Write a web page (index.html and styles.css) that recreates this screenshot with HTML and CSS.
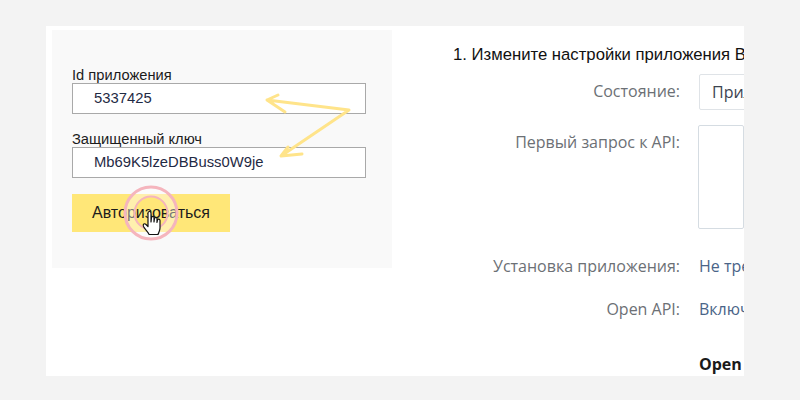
FILE: index.html
```html
<!DOCTYPE html>
<html lang="ru">
<head>
<meta charset="utf-8">
<title>Авторизация приложения</title>
<link rel="stylesheet" href="styles.css">
</head>
<body>
<main class="card">
  <section class="auth">
    <label class="label">Id приложения</label>
    <div class="input">5337425</div>
    <label class="label label-second">Защищенный ключ</label>
    <div class="input">Mb69K5lzeDBBuss0W9je</div>
    <button class="btn">Авторизоваться</button>
  </section>
  <section class="settings">
    <h2 class="title">1. Измените настройки приложения ВКонтакте</h2>
    <div class="row row-state">
      <div class="key">Состояние:</div>
      <div class="select">Приложение включено</div>
    </div>
    <div class="row row-first">
      <div class="key">Первый запрос к API:</div>
      <div class="textarea"></div>
    </div>
    <div class="row row-install">
      <div class="key">Установка приложения:</div>
      <div class="val">Не требуется</div>
    </div>
    <div class="row row-open">
      <div class="key">Open API:</div>
      <div class="val">Включен</div>
    </div>
    <div class="row row-head">
      <div class="key"></div>
      <div class="val strong">Open API</div>
    </div>
  </section>
  <svg class="arrows" width="110" height="80" viewBox="0 0 110 80" fill="none">
    <path class="arrow-line" d="M23 10 L12 15 L30 27 M12 15 L94 25 L26 71 L47 69 M26 71 L33 62"/>
  </svg>
  <svg class="pointer" width="64" height="64" viewBox="0 0 64 64">
    <circle class="ring-gap" cx="32" cy="32" r="21" stroke-width="8"/>
    <circle class="ring" cx="32" cy="32" r="26" stroke-width="3"/>
    <circle class="ring" cx="32" cy="32" r="16.5" stroke-width="2"/>
    <path class="hand" transform="translate(1 9)" d="M28 23 C28 21 31 21 31 23 L31 32 L31.5 27.5 C32 26 34 26 34 27.5 L34 32 L34.500 28.500 C35 27 37 27 37 28.500 L37 32.500 L37.500 30 C38 28.500 40 29 40 30.500 L40 38 C40 41 38.500 43 38 44.500 L29 44.500 C28.500 42 25 39.500 23.500 36.500 C22.500 34 24.500 33 26 34.500 L28 36.500 Z"/>
  </svg>
</main>
</body>
</html>
```
FILE: styles.css
```css
html, body {
  margin: 0;
  padding: 0;
  height: 400px;
  overflow: hidden;
  background: #f3f3f3;
}
body {
  padding-top: 26px;
  box-sizing: border-box;
  font-family: "Liberation Sans", Arial, sans-serif;
}
.card {
  position: relative;
  display: flex;
  width: 698px;
  height: 350px;
  margin-left: 46px;
  background: #fff;
  overflow: hidden;
}
.auth {
  flex: none;
  box-sizing: border-box;
  width: 340px;
  height: 238px;
  margin: 4px 0 0 6px;
  padding: 37px 26px 0 20px;
  background: #f9f9f9;
  display: flex;
  flex-direction: column;
  align-items: flex-start;
}
.label {
  font-size: 14.7px;
  line-height: 16px;
  color: #1c1c1c;
}
.label-second {
  margin-top: 17px;
}
.input {
  box-sizing: border-box;
  width: 294px;
  height: 31px;
  padding-left: 21px;
  border: 1px solid #a9a9a9;
  background: #fff;
  font-size: 14.8px;
  line-height: 29px;
  color: #1f2a44;
}
.btn {
  width: 158px;
  height: 38px;
  margin-top: 16px;
  padding: 0;
  border: 0;
  background: #ffe778;
  font: 16px "Liberation Sans", Arial, sans-serif;
  color: #1c1c1c;
}
.settings {
  flex: none;
  width: 352px;
  font-family: "Open Sans", sans-serif;
  font-size: 16px;
  white-space: nowrap;
}
.title {
  margin: 19px 0 0 61px;
  font: 16.7px/20px "Liberation Sans", Arial, sans-serif;
  color: #111;
}
.row {
  display: flex;
  align-items: flex-start;
}
.key {
  flex: none;
  width: 288px;
  text-align: right;
  color: #6c7075;
  line-height: 20px;
}
.val, .select, .textarea {
  margin-left: 19px;
  color: #4a6488;
  line-height: 20px;
}
.row-state {
  margin-top: 9px;
}
.row-state .key {
  padding-top: 7px;
}
.select {
  box-sizing: border-box;
  width: 220px;
  height: 36px;
  padding: 7px 12px;
  border: 1px solid #dfe3e7;
  border-radius: 2px;
  color: #3d4450;
}
.row-first {
  margin-top: 15px;
}
.row-first .key {
  padding-top: 7px;
}
.textarea {
  box-sizing: border-box;
  width: 220px;
  height: 104px;
  margin-left: 18px;
  border: 1px solid #d5dce2;
  border-radius: 2px;
}
.row-install {
  margin-top: 27px;
}
.row-open {
  margin-top: 23px;
}
.row-head {
  margin-top: 35px;
}
.strong {
  font-weight: 700;
  color: #1a1a1a;
}
.arrows {
  position: absolute;
  left: 209px;
  top: 59px;
}
.arrow-line {
  stroke: #ffe48a;
  stroke-width: 3;
  stroke-linejoin: round;
  stroke-linecap: round;
}
.pointer {
  position: absolute;
  left: 73px;
  top: 155px;
}
.ring {
  fill: none;
  stroke: #f5b5bd;
}
.ring-gap {
  fill: none;
  stroke: rgba(255, 255, 255, 0.4);
}
.hand {
  fill: #fff;
  stroke: #111;
  stroke-width: 1.2;
  stroke-linejoin: round;
}
```
